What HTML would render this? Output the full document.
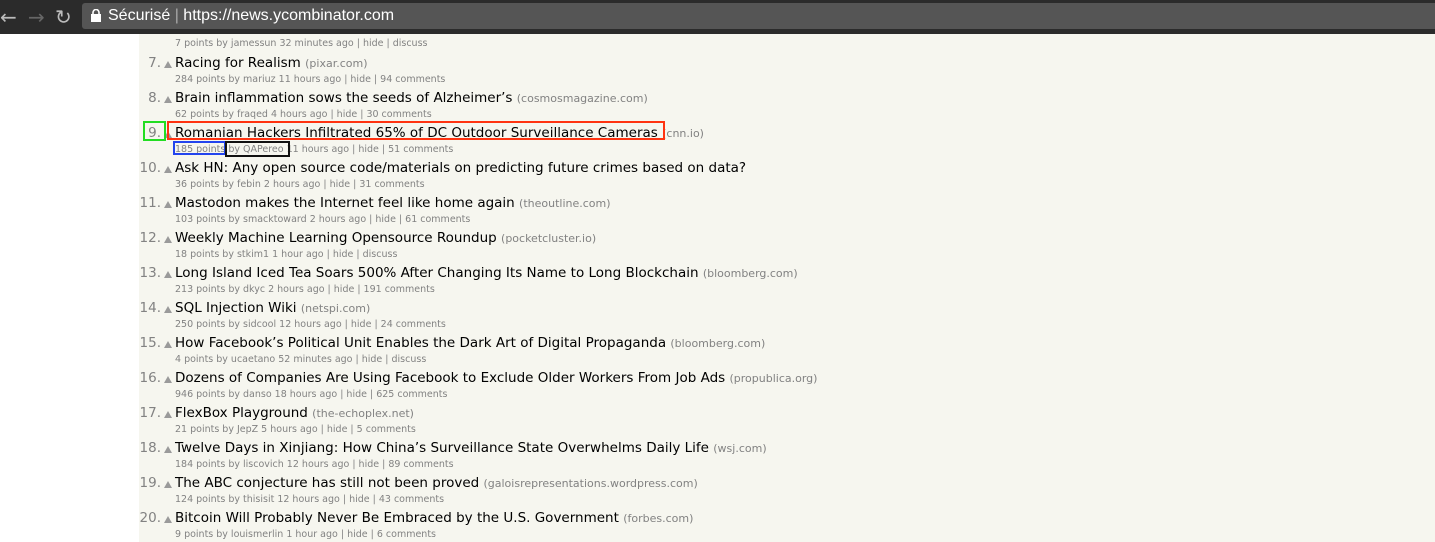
<!DOCTYPE html>
<html><head><meta charset="utf-8"><style>
*{margin:0;padding:0;box-sizing:border-box}
body{width:1435px;height:542px;overflow:hidden;background:#fff;font-family:"DejaVu Sans",Verdana,sans-serif;position:relative}
.bar{position:absolute;left:0;top:0;width:1435px;height:34px;background:#2b2b2b}
.addr{position:absolute;left:82px;top:3px;right:0;height:26px;background:#555;border-radius:3px 0 0 3px;color:#fff;font-family:"Liberation Sans",sans-serif;font-size:16px;line-height:26px;padding-left:26px}
.addr b{font-weight:normal;color:#fff}
.main{position:absolute;left:139px;top:34px;right:0;bottom:0;background:#f6f6ef}
.r{position:absolute;left:0;width:1296px}
.n{position:absolute;left:-10px;width:32px;text-align:right;top:0;font-size:13.5px;color:#828282;white-space:nowrap}
.a{position:absolute;left:25px;top:6px;width:0;height:0;border-left:4px solid transparent;border-right:4px solid transparent;border-bottom:7px solid #9a9a9a}
.t{position:absolute;left:36px;top:0;font-size:13.5px;color:#000;white-space:nowrap}
.t span{font-size:11px;color:#828282}
.s{position:absolute;left:36px;top:19px;font-size:9.5px;color:#828282;white-space:nowrap}
.nav{position:absolute;top:5px;color:#888;font-size:20px;font-family:"DejaVu Sans",sans-serif}
</style></head><body>
<div class="bar">
<div class="nav" style="left:0;color:#bbb">←</div>
<div class="nav" style="left:28px;color:#666">→</div>
<div class="nav" style="left:55px;color:#bbb">↻</div>
<div class="addr"><svg style="position:absolute;left:9px;top:6px" width="10" height="13" viewBox="0 0 10 13"><rect x="0" y="5" width="10" height="8" fill="#fff"/><path d="M2 5V3.5a3 3 0 0 1 6 0V5" stroke="#fff" stroke-width="1.6" fill="none"/></svg><b>Sécurisé</b> <span style="color:#aaa">|</span> https://news.ycombinator.com</div>
</div>
<div class="main">
<div class="r" style="top:4px"><div class="s" style="top:0">7 points by jamessun 32 minutes ago | hide | discuss</div></div>

<div class="r" style="top:21px"><div class="n">7.</div><div class="a"></div><div class="t">Racing for Realism <span>(pixar.com)</span></div><div class="s">284 points by mariuz 11 hours ago | hide | 94 comments</div></div>
<div class="r" style="top:56px"><div class="n">8.</div><div class="a"></div><div class="t">Brain inflammation sows the seeds of Alzheimer’s <span>(cosmosmagazine.com)</span></div><div class="s">62 points by fraqed 4 hours ago | hide | 30 comments</div></div>
<div class="r" style="top:91px"><div class="n">9.</div><div class="a"></div><div class="t">Romanian Hackers Infiltrated 65% of DC Outdoor Surveillance Cameras <span>(cnn.io)</span></div><div class="s">185 points by QAPereo 11 hours ago | hide | 51 comments</div></div>
<div class="r" style="top:126px"><div class="n">10.</div><div class="a"></div><div class="t">Ask HN: Any open source code/materials on predicting future crimes based on data?</div><div class="s">36 points by febin 2 hours ago | hide | 31 comments</div></div>
<div class="r" style="top:161px"><div class="n">11.</div><div class="a"></div><div class="t">Mastodon makes the Internet feel like home again <span>(theoutline.com)</span></div><div class="s">103 points by smacktoward 2 hours ago | hide | 61 comments</div></div>
<div class="r" style="top:196px"><div class="n">12.</div><div class="a"></div><div class="t">Weekly Machine Learning Opensource Roundup <span>(pocketcluster.io)</span></div><div class="s">18 points by stkim1 1 hour ago | hide | discuss</div></div>
<div class="r" style="top:231px"><div class="n">13.</div><div class="a"></div><div class="t">Long Island Iced Tea Soars 500% After Changing Its Name to Long Blockchain <span>(bloomberg.com)</span></div><div class="s">213 points by dkyc 2 hours ago | hide | 191 comments</div></div>
<div class="r" style="top:266px"><div class="n">14.</div><div class="a"></div><div class="t">SQL Injection Wiki <span>(netspi.com)</span></div><div class="s">250 points by sidcool 12 hours ago | hide | 24 comments</div></div>
<div class="r" style="top:301px"><div class="n">15.</div><div class="a"></div><div class="t">How Facebook’s Political Unit Enables the Dark Art of Digital Propaganda <span>(bloomberg.com)</span></div><div class="s">4 points by ucaetano 52 minutes ago | hide | discuss</div></div>
<div class="r" style="top:336px"><div class="n">16.</div><div class="a"></div><div class="t">Dozens of Companies Are Using Facebook to Exclude Older Workers From Job Ads <span>(propublica.org)</span></div><div class="s">946 points by danso 18 hours ago | hide | 625 comments</div></div>
<div class="r" style="top:371px"><div class="n">17.</div><div class="a"></div><div class="t">FlexBox Playground <span>(the-echoplex.net)</span></div><div class="s">21 points by JepZ 5 hours ago | hide | 5 comments</div></div>
<div class="r" style="top:406px"><div class="n">18.</div><div class="a"></div><div class="t">Twelve Days in Xinjiang: How China’s Surveillance State Overwhelms Daily Life <span>(wsj.com)</span></div><div class="s">184 points by liscovich 12 hours ago | hide | 89 comments</div></div>
<div class="r" style="top:441px"><div class="n">19.</div><div class="a"></div><div class="t">The ABC conjecture has still not been proved <span>(galoisrepresentations.wordpress.com)</span></div><div class="s">124 points by thisisit 12 hours ago | hide | 43 comments</div></div>
<div class="r" style="top:476px"><div class="n">20.</div><div class="a"></div><div class="t">Bitcoin Will Probably Never Be Embraced by the U.S. Government <span>(forbes.com)</span></div><div class="s">9 points by louismerlin 1 hour ago | hide | 6 comments</div></div>

<div style="position:absolute;left:4px;top:87px;width:23px;height:20px;border:2px solid #22dd22"></div>
<div style="position:absolute;left:28px;top:87px;width:498px;height:19px;border:2px solid #ff3311"></div>
<div style="position:absolute;left:34px;top:107px;width:53px;height:14px;border:2px solid #2244ee"></div>
<div style="position:absolute;left:86px;top:107px;width:65px;height:16px;border:2px solid #111"></div>
</div>
</body></html>
